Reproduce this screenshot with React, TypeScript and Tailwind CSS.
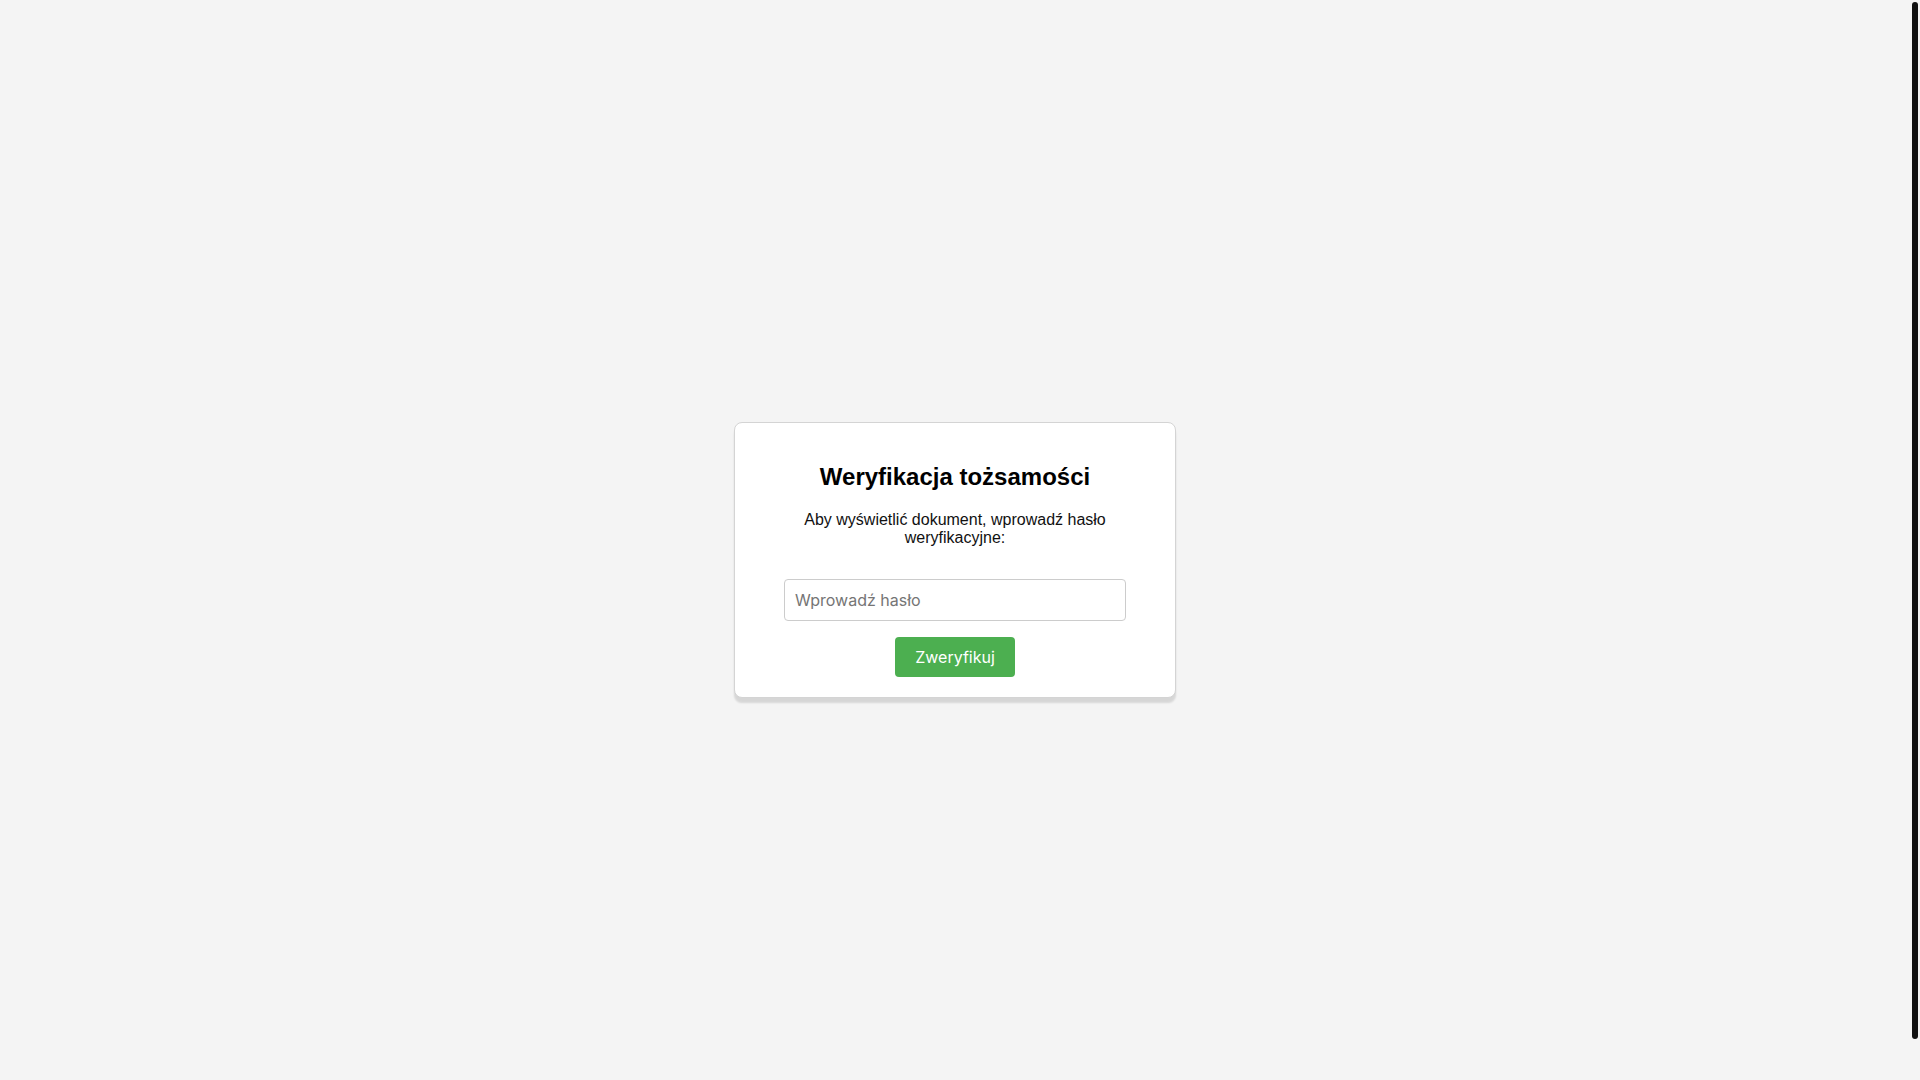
import { useState } from 'react';

export default function App() {
  const [password, setPassword] = useState('');

  return (
    <div className="h-screen w-full overflow-hidden flex bg-[#f4f4f4] font-['Liberation_Sans',Arial,sans-serif]">
      <div className="flex-1 min-w-0">
        <div className="box-content h-screen p-5 flex items-center justify-center">
          <div className="box-content w-[400px] p-5 bg-white border border-[#d4d4d4] rounded-lg shadow-[0_5px_2px_rgba(0,0,0,0.12)] text-center">
            <h2 className="mt-5 mb-5 text-[24px] leading-[normal] font-bold text-black">Weryfikacja tożsamości</h2>
            <p className="mb-8 text-[16px] leading-[normal] text-[#111]">
              Aby wyświetlić dokument, wprowadź hasło weryfikacyjne:
            </p>
            <input
              type="password"
              value={password}
              onChange={(e) => setPassword(e.target.value)}
              placeholder="Wprowadź hasło"
              className="box-content block mx-auto w-4/5 px-[10px] py-[10px] border border-[#ccc] rounded-[4px] bg-white font-['Inter',sans-serif] text-[16px] leading-[normal] text-[#222] placeholder:text-[#757575] focus:outline-none"
            />
            <button
              className="mt-4 px-5 py-[10px] rounded-[4px] bg-[#4caf50] text-white font-['Inter',sans-serif] text-[16px] leading-[normal] cursor-pointer hover:bg-[#45a049]"
            >
              Zweryfikuj
            </button>
          </div>
        </div>
      </div>
      {/* page scrollbar */}
      <div className="w-[10px] shrink-0 pt-[2px] pl-[2px]">
        <div className="w-[6px] h-[1037px] rounded-[3px] bg-[#111]" />
      </div>
    </div>
  );
}
